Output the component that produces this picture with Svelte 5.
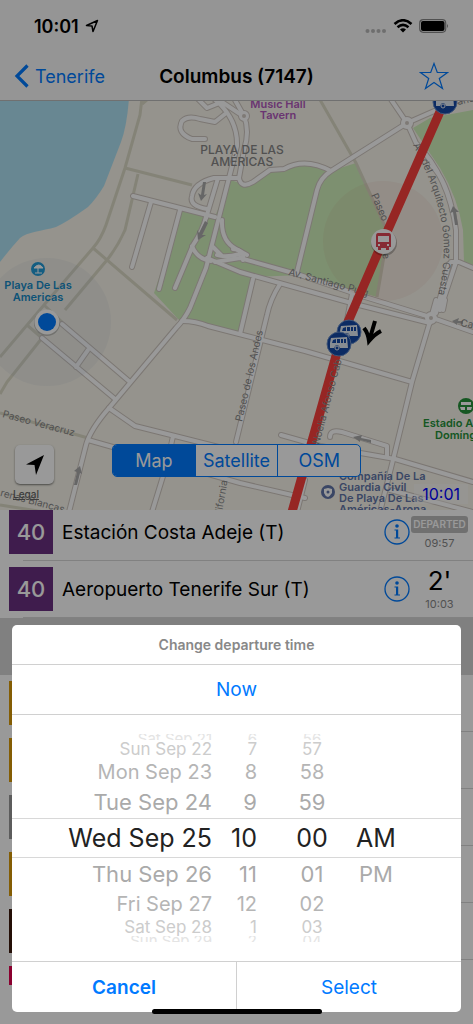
<script lang="ts">
  const departures = [
    { line: '40', name: 'Estación Costa Adeje (T)', wait: '', time: '09:57' },
    { line: '40', name: 'Aeropuerto Tenerife Sur (T)', wait: "2'", time: '10:03' },
  ];
  const later = ['#dd9b08', '#dd9b08', '#999999', '#dd9b08', '#3c1a0c', '#e6004f'];

  const modes = ['Map', 'Satellite', 'OSM'];
  let mode = $state('Map');

  // nine visible rows per wheel, the middle one is selected
  const wheels = [
    {
      name: 'date',
      values: ['Sat Sep 21', 'Sun Sep 22', 'Mon Sep 23', 'Tue Sep 24', 'Wed Sep 25', 'Thu Sep 26', 'Fri Sep 27', 'Sat Sep 28', 'Sun Sep 29'],
    },
    { name: 'hour', values: ['6', '7', '8', '9', '10', '11', '12', '1', '2'] },
    { name: 'minute', values: ['56', '57', '58', '59', '00', '01', '02', '03', '04'] },
    { name: 'period', values: ['', '', '', '', 'AM', 'PM', '', '', ''] },
  ];

  const paths = [
    'M142 98L140 115L125 168L106 225Q101 239 93 248L44 305L0 357',
    'M142 104L148 99M125 168L192 185M138 174L125 230Q118 246 107 260L65 310',
    'M93 248L177 320M27 325L42 338M42 338L7 382L0 394M44 305L62 322',
    'M319 98L356 163L388 233L377 297',
    'M0 413L88 438M0 505L70 516',
  ];
  const roads = [
    'M133 196L180 208L215 217M151 202L132 267M180 210L159 289',
    'M206 217Q203 230 193 245L175 288M192 246Q197 259 211 261',
    'M205 139H192Q176 133 182 121Q188 115 200 119L215 122L225 114',
    'M197 98L207 108L222 102L243 116M213 98Q238 118 237 146L229 178L206 268L190 308Q184 320 176 328L109 408Q90 430 86 445L69 512',
    'M218 178L206 218M239 178H214Q194 183 192 196Q189 206 207 209',
    'M222 220Q221 241 236 249L247 255M217 255Q225 258 240 254M213 247L222 256',
    'M235 100L244 116Q250 131 244 150L239 178Q241 189 253 182L270 170L284 169Q305 157 331 171L407 123L473 94M331 171Q320 178 317 190L297 272',
    'M390 98L407 123L416 143Q449 177 456 230V262L440 310M432 166Q447 181 454 218M451 262H459L473 268M449 264L436 313',
    'M215 262L240 258L300 275L365 297L430 317L473 332M207 258L240 272L355 304L430 323M233 249Q245 250 243 260',
    'M253 279L240 334M280 284Q270 300 267 315L236 442M352 294L347 320',
    'M182 321Q196 321 208 326L305 351L412 382M436 300L431 318L412 382L393 460L380 512M445 300L443 310',
    'M62 324L130 382M42 338L115 399M88 350L76 367',
    'M109 408L135 426L175 436L250 455M88 440L240 483L305 498M173 436L168 460L152 512',
    'M281 435L320 446L395 459L473 482M330 437Q330 429 342 432L387 446V456M305 480L297 512M390 490L473 512',
  ];
</script>

{#snippet bus(x, y)}
  <g transform="translate({x} {y})">
    <circle r="12" fill="#1549a6" stroke="#6c8fc8" />
    <path d="M-8-6L8-7L9 4H1Q0 1-2 1Q-4 1-5 4H-9V-1Z" fill="#e2e9f4" />
    <path d="M-6-4L-3-5V-1H-7ZM-2-5H1V-1H-2ZM2-5H4V-1H2ZM5-5H7V-1H5Z" fill="#1549a6" />
    <circle cx="-2" cy="4" r="2" fill="#1549a6" stroke="#e2e9f4" />
  </g>
{/snippet}

<div class="page">
  <header>
    <div class="status">
      <span class="clock">
        10:01
        <svg width="14" height="14" viewBox="0 0 14 14"><path d="M1.500 6.500L12.500 1.500L8 12.500L7 7Z" fill="none" stroke="#000" stroke-width="1.500" stroke-linejoin="round" /></svg>
      </span>
      <span class="signals">
        <svg width="22" height="8" viewBox="0 0 22 8" fill="#b8b8b8"><circle cx="2.500" cy="5" r="2" /><circle cx="8" cy="5" r="2" /><circle cx="13.500" cy="5" r="2" /><circle cx="19" cy="5" r="2" /></svg>
        <svg width="20" height="14" viewBox="0 0 20 14" fill="none" stroke="#000" stroke-width="2.600"><path d="M1.500 5Q10-2.500 18.500 5M4.500 8.200Q10 3.600 15.500 8.200" /><path d="M7 10.500Q10 8 13 10.500L10 13.500Z" fill="#000" stroke="none" /></svg>
        <svg width="30" height="14" viewBox="0 0 30 14"><rect x=".7" y=".7" width="26" height="12.600" rx="3.500" fill="none" stroke="#888" stroke-width="1.200" /><rect x="2" y="2" width="23.500" height="10" rx="2" /><path d="M28 5Q30 7 28 9Z" fill="#888" /></svg>
      </span>
    </div>
    <nav>
      <a class="back" href="#tenerife">
        <svg width="16" height="26" viewBox="0 0 16 26"><path d="M13.500 2.500L3 13L13.500 23.500" fill="none" stroke="#007aff" stroke-width="3.200" /></svg>
        Tenerife
      </a>
      <h1>Columbus (7147)</h1>
      <button class="star" aria-label="Favourite">
        <svg width="30" height="28" viewBox="0 0 30 28"><path d="M15 1.500L18.300 10.500H28.500L20.300 16.500L23.500 26.500L15 20.500L6.500 26.500L9.700 16.500L1.500 10.500H11.700Z" fill="none" stroke="#007aff" stroke-width="1.200" /></svg>
      </button>
    </nav>
  </header>

  <section class="map">
    <svg class="chart" viewBox="0 101 473 409">
      <rect y="101" width="473" height="409" fill="#f8f5eb" />
      <path d="M0 98H129Q127 126 121 142L104 186Q96 199 88 207Q67 222 56 227C42 231 27 232 20 238Q10 249 0 262Z" fill="#aee2f4" />
      <g fill="#d0f0bb">
        <path d="M181 211L214 219L230 180L247 185L270 170L284 169Q305 157 331 171L356 163L388 235L377 297L300 275L252 277L240 334L180 321L154 293Z" />
        <path d="M413 128L430 118L473 110V265L464 262L463 230Q458 198 440 168Z" />
      </g>
      {#each paths as d}
        <path {d} fill="none" stroke="#dcdac7" stroke-width="3" />
      {/each}
      <g fill="none" stroke="#cfc7c0" stroke-width="6" stroke-linecap="round" stroke-linejoin="round">
        {#each roads as d}<path {d} />{/each}
        <circle cx="244" cy="116" r="3" /><circle cx="407" cy="123" r="4" /><circle cx="431" cy="318" r="4" />
      </g>
      <g fill="none" stroke="#fff" stroke-width="4" stroke-linecap="round" stroke-linejoin="round">
        {#each roads as d}<path {d} />{/each}
        <circle cx="244" cy="116" r="3" /><circle cx="407" cy="123" r="4" /><circle cx="431" cy="318" r="4" />
      </g>
      <g fill="#d3cbc4"><circle cx="244" cy="116" r="2" /><circle cx="407" cy="123" r="2" /><circle cx="431" cy="318" r="2" /></g>
      <circle cx="47" cy="322" r="64" fill="#8296c0" opacity=".08" />
      <circle cx="383" cy="241" r="60" fill="#c95b4c" opacity=".06" />

      <g fill="#aaa">
        <path id="arrow" d="M203 182H206L204 195L207 194L201 201L198 193L201 195Z" />
        <path d="M205 221L208 223L202 235L206 235L198 240L197 230L199 233Z" />
        <path d="M74 485H77L80 473L82 474L80 466L74 471L77 472Z" />
        <path d="M455 225H458L456 212L459 212L453 206L450 213L453 212Z" />
        <path d="M371 443V440L361 438L362 435L353 437L360 442L360 440Z" />
        <path d="M463 324V321L458 321L459 318L452 321L457 325V323Z" />
      </g>

      <g class="street">
        <text x="288" y="275" transform="rotate(15 288 275)">Av. Santiago Puig</text>
        <text x="371" y="195" transform="rotate(67 371 195)">Paseo v</text>
        <text x="242" y="422" transform="rotate(-77 242 422)">Paseo de los Andes</text>
        <text x="2" y="417" transform="rotate(15 2 417)">Paseo Veracruz</text>
        <text x="-7" y="494" transform="rotate(15 -7 494)">Arenas Blancas</text>
        <text x="221" y="518" transform="rotate(-80 221 518)">alifornia</text>
        <text x="460" y="326" transform="rotate(10 460 326)">Ca.</text>
        <text x="458" y="105" transform="rotate(-12 458 105)">ano</text>
        <text x="382" y="254" transform="rotate(75 382 254)">e</text>
        <path id="cuesta" d="M413 145Q435 187 441 220Q449 260 434 310" fill="none" />
        <text><textPath href="#cuesta">Av. del Arquitecto Gómez Cuesta</textPath></text>
      </g>

      <path d="M446 98L383 241L341 338L292 512" fill="none" stroke="#fb403c" stroke-width="9" />
      <text class="street" x="319" y="445" transform="rotate(-75 319 445)">Noelia Afonso Cab</text>

      <g class="place" text-anchor="middle">
        <g fill="#b158bd"><text x="278" y="108">Music Hall</text><text x="278" y="119">Tavern</text></g>
        <g fill="#888" class="area"><text x="242" y="154">PLAYA DE LAS</text><text x="242" y="166">AMÉRICAS</text></g>
        <g fill="#168ac6"><text x="38" y="289">Playa De Las</text><text x="38" y="301">Americas</text></g>
      </g>
      <g class="place" fill="#25913a">
        <text x="423" y="427">Estadio Ant.</text>
        <text x="435" y="439">Domínguez</text>
      </g>
      <g class="place" fill="#6275a8">
        <text x="339" y="480">Compañía De La</text>
        <text x="339" y="491">Guardia Civil</text>
        <text x="339" y="502">De Playa De Las</text>
        <text x="339" y="513">Américas-Arona</text>
      </g>
      <circle cx="38" cy="269" r="7" fill="#229bd8" />
      <path d="M34 268Q39 262 43 268ZM38 267V273M35 273H42" fill="#fff" stroke="#fff" />
      <circle cx="466" cy="406" r="8" fill="#25913a" />
      <path d="M461 402H471V405H461ZM460 407H465V410H461ZM467 407H472L471 410H467Z" fill="#fff" />
      <circle cx="328" cy="492" r="7" fill="#6275a8" />
      <path d="M324 489L328 488L332 489V493Q330 496 328 497Q325 496 324 493Z" fill="#fff" /><circle cx="328" cy="492" r="1.500" fill="#6275a8" />

      <circle cx="47" cy="323" r="13" opacity=".2" />
      <circle cx="47" cy="322" r="12.500" fill="#fff" />
      <circle cx="47" cy="322" r="9" fill="#007aff" />

      <circle cx="384" cy="243" r="13" opacity=".25" />
      <circle cx="383.500" cy="241.500" r="12.500" fill="#fff" />
      <path d="M378 233H389Q391 233 391 236V247H389V250H386V248H381V250H378V247H376V236Q376 233 378 233Z" fill="#e04756" />
      <path d="M378 236H389V242H378ZM378 244H380V246H378ZM387 244H389V246H387Z" fill="#fff" />

      {@render bus(445, 102)}
      {@render bus(349, 332)}
      {@render bus(339, 344)}
      <path d="M375 321L370 338M364 328Q368 333 369 341Q375 334 381 331" fill="none" stroke="#000" stroke-width="4" />
    </svg>
    <button class="locate" aria-label="My location">
      <svg width="18" height="20" viewBox="0 0 18 20"><path d="M0 9.500L18 0L10 20L8.500 10Z" /></svg>
    </button>
    <a class="legal" href="#legal">Legal</a>
    <div class="modes">
      {#each modes as item}
        <button class:active={mode === item} onclick={() => (mode = item)}>{item}</button>
      {/each}
    </div>
    <time class="now">10:01</time>
  </section>

  <div class="list">
    {#each departures as item}
      <div class="row">
        <span class="badge">{item.line}</span>
        <span class="name">{item.name}</span>
        <button class="info" aria-label="Information">
          <svg width="26" height="26" viewBox="0 0 26 26"><circle cx="13" cy="13" r="12" fill="none" stroke="#007aff" stroke-width="1.300" /><circle cx="13" cy="7" r="1.800" fill="#007aff" /><path d="M10.500 10.500H14.200V18.500H16V19.500H10.500V18.500H12V11.500H10.500Z" fill="#007aff" /></svg>
        </button>
        <span class="when">
          {#if item.wait}
            <b>{item.wait}</b>
          {:else}
            <em>DEPARTED</em>
          {/if}
          <time>{item.time}</time>
        </span>
      </div>
    {/each}
    <div class="section"></div>
    {#each later as color}
      <div class="row">
        <span class="badge" style="background: {color}"></span>
      </div>
    {/each}
  </div>
</div>

<div class="overlay">
  <div class="dialog" role="dialog" aria-labelledby="dialog-title">
    <h2 id="dialog-title">Change departure time</h2>
    <button class="reset">Now</button>
    <div class="picker">
      {#each wheels as wheel}
        <div class="wheel {wheel.name}" role="listbox" aria-label={wheel.name}>
          {#each wheel.values as value, i}
            <div class="value d{Math.abs(i - 4)}" role="option" aria-selected={i === 4}>{value}</div>
          {/each}
        </div>
      {/each}
    </div>
    <div class="actions">
      <button class="cancel">Cancel</button>
      <button>Select</button>
    </div>
  </div>
  <div class="home"></div>
</div>

<style>
  :global(body) {
    margin: 0;
    background: #fff;
  }

  .page,
  .overlay {
    font-family: Inter, 'Liberation Sans', sans-serif;
    color: #000;
  }

  .page {
    height: 100vh;
    overflow: hidden;
    display: flex;
    flex-direction: column;
  }

  button {
    font: inherit;
    border: 0;
    padding: 0;
    background: none;
    color: #007aff;
  }

  a {
    text-decoration: none;
  }

  svg {
    display: block;
  }

  header {
    background: #f9f9f9;
    border-bottom: 1px solid #bbb;
    flex: none;
  }

  .status {
    height: 52px;
    padding: 0 24px 0 34px;
    display: flex;
    align-items: center;
    justify-content: space-between;
  }

  .clock,
  .signals {
    display: flex;
    align-items: center;
    gap: 4px;
    font-size: 18px;
    font-weight: 600;
  }

  .clock {
    gap: 6px;
  }

  .signals {
    gap: 6px;
  }

  .signals svg:first-child {
    margin-top: 8px;
  }

  nav {
    height: 48px;
    padding: 0 24px 0 14px;
    display: flex;
    align-items: center;
    justify-content: space-between;
  }

  .back {
    flex: 1;
    display: flex;
    align-items: center;
    gap: 5px;
    font-size: 18px;
    color: #007aff;
  }

  h1 {
    margin: 0;
    padding-left: 10px;
    font-size: 19px;
    font-weight: 600;
  }

  .star {
    flex: 1;
    display: flex;
    justify-content: flex-end;
  }

  .map {
    position: relative;
    flex: none;
  }

  .chart {
    width: 100%;
  }

  .street {
    font-size: 10px;
    fill: #888;
  }

  .place {
    font-size: 11px;
    font-weight: 600;
  }

  .area {
    font-size: 12px;
    font-weight: 500;
  }

  .locate {
    position: absolute;
    left: 15px;
    bottom: 26px;
    width: 39px;
    height: 39px;
    border-radius: 5px;
    background: #fff;
    box-shadow: 0 1px 2px rgba(0, 0, 0, 0.5);
    display: grid;
    place-items: center;
  }

  .legal {
    position: absolute;
    left: 13px;
    bottom: 10px;
    font-size: 10px;
    font-weight: 500;
    color: #666;
    text-decoration: underline;
  }

  .modes {
    position: absolute;
    left: 112px;
    right: 112px;
    bottom: 33px;
    height: 33px;
    box-sizing: border-box;
    display: flex;
    border: 1px solid #007aff;
    border-radius: 5px;
    background: #fff;
    overflow: hidden;
    font-size: 18px;
  }

  .modes button {
    flex: 1;
  }

  .modes button + button {
    border-left: 1px solid #007aff;
  }

  .modes .active {
    background: #007aff;
    color: #fff;
  }

  .now {
    position: absolute;
    right: 5px;
    bottom: 6px;
    padding: 0 8px;
    font-size: 16px;
    line-height: 20px;
    color: #00f;
    background: rgba(255, 255, 255, 0.4);
  }

  .list {
    flex: 1;
    overflow: hidden;
    margin-bottom: 39px;
  }

  .row {
    height: 57px;
    box-sizing: border-box;
    padding: 0 4px 1px 9px;
    display: flex;
    align-items: center;
    background: linear-gradient(#d8d8d8, #d8d8d8) 23px 100% / 100% 1px no-repeat;
  }

  .row:first-child {
    height: 51px;
    padding-bottom: 7px;
  }

  .badge {
    width: 44px;
    height: 44px;
    background: #6a2f80;
    color: #fff;
    font-size: 22px;
    font-weight: 500;
    display: grid;
    place-items: center;
  }

  .name {
    flex: 1;
    padding-left: 9px;
    font-size: 19px;
    white-space: nowrap;
  }

  .when {
    width: 59px;
    display: flex;
    flex-direction: column;
    align-items: center;
    gap: 4px;
  }

  .when b {
    font-size: 26px;
    font-weight: 400;
    line-height: 26px;
  }

  .when em {
    font-style: normal;
    font-size: 10px;
    font-weight: 600;
    line-height: 17px;
    padding: 0 2px;
    border-radius: 3px;
    background: #bbb;
    color: #fff;
  }

  .when time {
    font-size: 11px;
    line-height: 12px;
    color: #888;
  }

  .section {
    height: 57px;
    background: #d6d6d6;
  }

  .overlay {
    position: fixed;
    inset: 0;
    display: flex;
    flex-direction: column;
    justify-content: flex-end;
    padding: 0 12px 12px;
    background: rgba(0, 0, 0, 0.4);
  }

  .dialog {
    background: #fff;
    border-radius: 5px;
  }

  h2 {
    margin: 0;
    font-size: 14px;
    line-height: 39px;
    font-weight: 600;
    text-align: center;
    color: #888;
  }

  .reset {
    width: 100%;
    height: 51px;
    border-top: 1px solid #d0d0d0;
    border-bottom: 1px solid #d0d0d0;
    font-size: 19px;
  }

  .picker {
    position: relative;
    display: flex;
    justify-content: center;
    padding: 19px 0;
  }

  /* band round the selected row */
  .picker::before {
    content: '';
    position: absolute;
    left: 0;
    right: 0;
    top: 103px;
    height: 38px;
    border-top: 1px solid #d8d8d8;
    border-bottom: 1px solid #d8d8d8;
  }

  .wheel {
    width: 58px;
    text-align: center;
    white-space: nowrap;
  }

  .date {
    width: 144px;
    text-align: right;
  }

  .hour {
    width: 45px;
    margin-right: 20px;
    text-align: right;
  }

  .minute {
    width: 70px;
  }

  .value {
    overflow: hidden;
    color: #aaa;
  }

  .d0 {
    height: 40px;
    line-height: 40px;
    font-size: 25px;
    color: #222;
  }

  .d1 {
    height: 32px;
    line-height: 32px;
    font-size: 22px;
  }

  .d2 {
    height: 28px;
    line-height: 28px;
    font-size: 20px;
    color: #b5b5b5;
  }

  .d3 {
    height: 18px;
    line-height: 18px;
    font-size: 17px;
    color: #ccc;
  }

  .d4 {
    height: 6px;
    line-height: 10px;
    font-size: 15px;
    color: #e4e4e4;
  }

  .actions {
    display: flex;
    border-top: 1px solid #d0d0d0;
  }

  .actions button {
    flex: 1;
    height: 50px;
    font-size: 19px;
  }

  .actions button + button {
    border-left: 1px solid #d0d0d0;
  }

  .actions .cancel {
    font-weight: 600;
  }

  .home {
    position: absolute;
    left: 50%;
    bottom: 10px;
    width: 170px;
    height: 5px;
    margin-left: -85px;
    border-radius: 3px;
    background: #000;
  }
</style>
